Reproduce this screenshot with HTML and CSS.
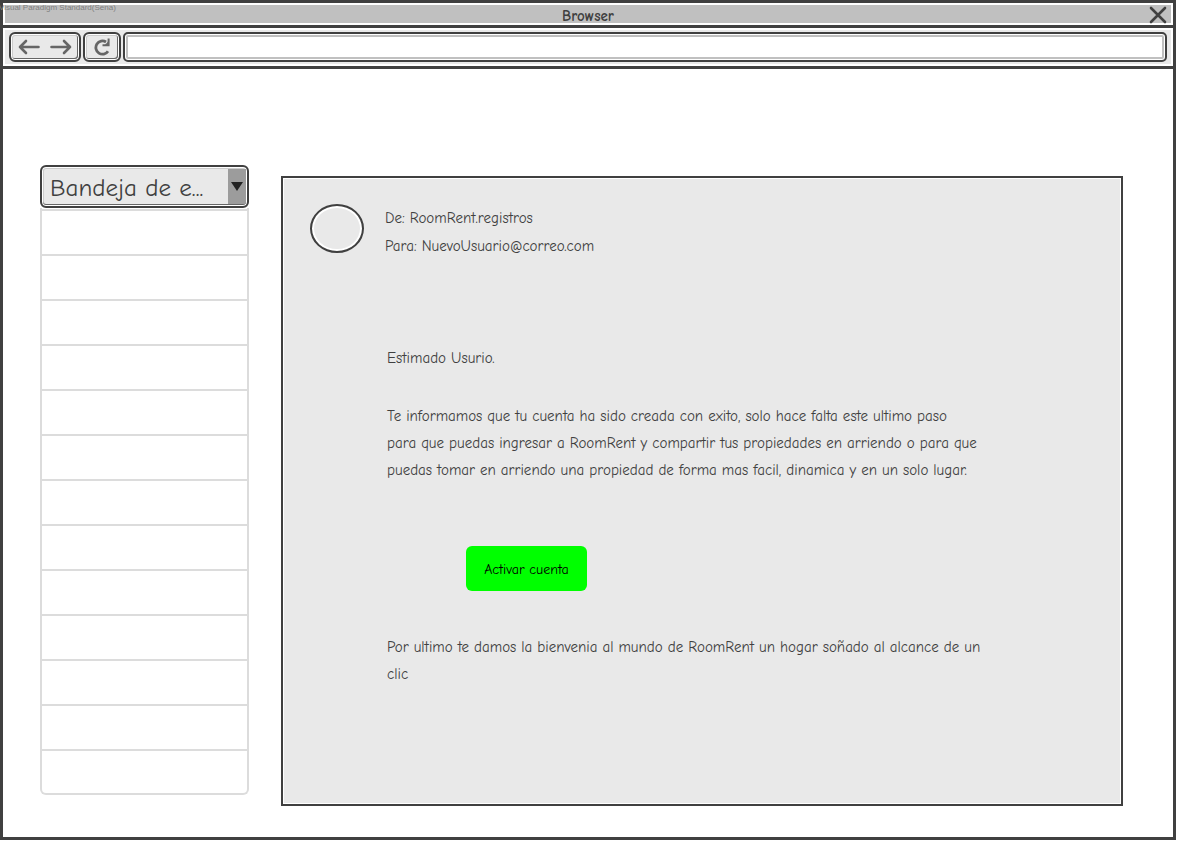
FILE: index.html
```html
<!DOCTYPE html>
<html lang="es">
<head>
<meta charset="utf-8">
<title>Browser</title>
<link rel="stylesheet" href="styles.css">
</head>
<body>
<div class="window">
  <span class="watermark">Visual Paradigm Standard(Sena)</span>
  <header class="titlebar">
    <h1 class="title">Browser</h1>
    <button class="close" type="button" aria-label="Cerrar">
      <svg width="18" height="18" viewBox="0 0 18 18"><path d="M2 2 16 16M16 2 2 16" fill="none" stroke="#404040" stroke-width="2.600" stroke-linecap="round"/></svg>
    </button>
  </header>
  <nav class="toolbar">
    <div class="tool nav-pair">
      <button class="icon" type="button" aria-label="Atrás">
        <svg width="22" height="16" viewBox="0 0 22 16"><path d="M20.500 8H2M8 2 2 8l6 6" fill="none" stroke="#666" stroke-width="2.600" stroke-linecap="round" stroke-linejoin="round"/></svg>
      </button>
      <button class="icon" type="button" aria-label="Adelante">
        <svg width="22" height="16" viewBox="0 0 22 16"><path d="M1.500 8H20M14 2l6 6-6 6" fill="none" stroke="#666" stroke-width="2.600" stroke-linecap="round" stroke-linejoin="round"/></svg>
      </button>
    </div>
    <button class="tool reload" type="button" aria-label="Recargar">
      <svg width="18" height="18" viewBox="0 0 18 18"><path d="M15 13.200A6.600 6.600 0 1 1 13 4" fill="none" stroke="#666" stroke-width="2.800"/><path d="M15.600 0.500V7.200H9.500" fill="none" stroke="#666" stroke-width="2"/><path d="M11.500 7.500 15.500 3V7.500Z" fill="#666"/></svg>
    </button>
    <input class="address" type="text" aria-label="Dirección">
  </nav>
  <main class="content">
    <aside class="sidebar">
      <div class="picker">
        <select class="folder" aria-label="Carpeta"><option>Bandeja de e...</option></select>
        <span class="arrow"><svg width="12" height="9" viewBox="0 0 12 9"><path d="M0 0H12L6 9Z" fill="#222"/></svg></span>
      </div>
      <ul class="list">
        <li></li><li></li><li></li><li></li><li></li><li></li><li></li><li></li><li></li><li></li><li></li><li></li><li></li>
      </ul>
    </aside>
    <article class="mail">
      <div class="sender">
        <span class="avatar"></span>
        <div class="people">
          <p>De: RoomRent.registros</p>
          <p>Para: NuevoUsuario@correo.com</p>
        </div>
      </div>
      <div class="message">
        <p>Estimado Usurio.</p>
        <p class="info">Te informamos que tu cuenta ha sido creada con exito, solo hace falta este ultimo paso<br>para que puedas ingresar a RoomRent y compartir tus propiedades en arriendo o para que<br>puedas tomar en arriendo una propiedad de forma mas facil, dinamica y en un solo lugar.</p>
        <button class="activate" type="button">Activar cuenta</button>
        <p>Por ultimo te damos la bienvenia al mundo de RoomRent un hogar soñado al alcance de un<br>clic</p>
      </div>
    </article>
  </main>
</div>
</body>
</html>
```
FILE: styles.css
```css
* { box-sizing: border-box; }

body {
  margin: 0;
  padding: 0 4px 4px 0;
  background: #fff;
  color: #404040;
  font-family: "Comic Sans MS", "Comic Neue", Lato, sans-serif;
  font-size: 15px;
}

button, input, select { font-family: inherit; color: inherit; }
button { cursor: pointer; }
p, h1, ul { margin: 0; padding: 0; }
svg { display: block; }

.window {
  position: relative;
  display: flex;
  flex-direction: column;
  min-height: calc(100vh - 4px);
  border: 3px solid #404040;
}

.watermark {
  position: absolute;
  top: 0;
  left: -4px;
  font: 8px/10px "Liberation Sans", Arial, sans-serif;
  color: #808080;
}

.titlebar {
  display: grid;
  grid-template-columns: 1fr auto 1fr;
  align-items: center;
  height: 22px;
  border: 2px solid #fff;
  background: #c0c0c0;
}

.title {
  grid-column: 2;
  padding-top: 2px;
  font-size: 15px;
  line-height: 18px;
}

.close {
  justify-self: end;
  margin-right: 4px;
  padding: 0;
  border: 0;
  background: none;
}

.toolbar {
  display: flex;
  align-items: center;
  gap: 2px;
  height: 44px;
  padding: 0 6px;
  border-top: 3px solid #404040;
  border-bottom: 3px solid #404040;
  background: #e9e9e9;
  box-shadow: inset 0 0 0 2px #fff;
}

.tool {
  display: flex;
  align-items: center;
  justify-content: center;
  height: 30px;
  padding: 0;
  border: 2px solid #404040;
  border-radius: 6px;
  background: #e9e9e9;
  box-shadow: inset 0 0 0 1px #fff, inset -1px -1px 0 1px #666, inset 0 0 0 2px #ccc;
}

.nav-pair { gap: 10px; width: 72px; }
.reload { width: 38px; }
.icon { padding: 0; border: 0; background: none; }

.address {
  flex: 1;
  min-width: 0;
  height: 30px;
  padding: 0 8px;
  border: 2px solid #404040;
  border-radius: 5px;
  background: #fff;
  box-shadow: inset 0 0 0 1px #fff, inset 0 0 0 3px #c0c0c0;
  font-size: 15px;
}

.content {
  display: flex;
  flex: 1;
  gap: 32px;
  padding: 96px 50px 31px 37px;
}

.sidebar { width: 209px; flex: none; }
.picker { position: relative; }

.folder {
  display: block;
  width: 100%;
  height: 43px;
  padding: 2px 24px 0 8px;
  border: 2px solid #404040;
  border-radius: 6px;
  background: #e9e9e9;
  box-shadow: inset 0 0 0 1px #fff, inset 0 -1px 0 1px #666, inset 0 0 0 2px #ccc;
  font-size: 25px;
  appearance: none;
}

.arrow {
  position: absolute;
  top: 4px;
  right: 3px;
  bottom: 4px;
  display: flex;
  align-items: center;
  justify-content: center;
  width: 18px;
  background: #9c9c9c;
  pointer-events: none;
}

.list {
  padding-top: 1px;
  border: 2px solid #dcdcdc;
  border-top: 0;
  border-radius: 0 0 6px 6px;
  list-style: none;
}

.list li { height: 45px; border-top: 2px solid #dcdcdc; }
.list li:last-child { height: 44px; }

.mail {
  flex: 1;
  min-width: 0;
  margin-top: 11px;
  padding: 26px 27px;
  border: 2px solid #404040;
  background: #e9e9e9;
  box-shadow: inset 0 0 0 1px #fff;
}

.sender { display: flex; gap: 21px; }

.avatar {
  width: 54px;
  height: 49px;
  border: 2px solid #404040;
  border-radius: 50%;
  box-shadow: inset 0 0 0 2px #fff;
}

.people { line-height: 28px; }

.message {
  margin-top: 85px;
  padding-left: 77px;
  line-height: 27px;
}

.info { margin-top: 31px; }

.activate {
  display: block;
  min-width: 121px;
  height: 45px;
  margin: 62px 0 43px 79px;
  padding: 2px 12px 0;
  border: 0;
  border-radius: 6px;
  background: #0f0;
  color: #000;
  font-size: 14px;
}
```
